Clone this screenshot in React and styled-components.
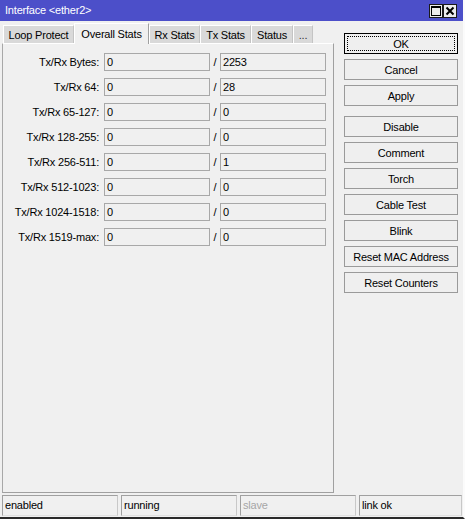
import React from "react";
import styled, { createGlobalStyle } from "styled-components";

const GlobalStyle = createGlobalStyle`
  html, body { margin: 0; padding: 0; background: #f0f0f0; }
  body { font-family: "Liberation Sans", Arial, sans-serif; font-size: 11px; letter-spacing: -0.2px; color: #000; }
  * { box-sizing: border-box; }
`;

const Window = styled.div`
  width: 465px;
  height: 519px;
  background: #f0f0f0;
  display: flex;
  flex-direction: column;
  border-right: 2px solid #fbfbfb;
  border-bottom: 2px solid #2a2a2a;
  overflow: hidden;
`;

const TitleBar = styled.div`
  height: 21px;
  flex: none;
  background: #4c4fc9;
  color: #fff;
  display: flex;
  align-items: center;
  padding: 0 6px 0 5px;
  font-size: 11px;
`;

const TitleText = styled.span`
  flex: 1;
  line-height: 21px;
`;

const TitleButtons = styled.div`
  display: flex;
  margin-top: 1px;
`;

const TitleBtn = styled.div`
  width: 14px;
  height: 14px;
  background: #ececec;
  border: 1px solid #1a1a1a;
  display: flex;
  align-items: center;
  justify-content: center;
`;

const Body = styled.div`
  flex: 1;
  display: flex;
  min-height: 0;
`;

const LeftCol = styled.div`
  width: 334px;
  padding-left: 2px;
  display: flex;
  flex-direction: column;
`;

const TabRow = styled.div`
  height: 21px;
  margin-top: 1px;
  display: flex;
  align-items: flex-end;
  padding-left: 1px;
  position: relative;
  z-index: 1;
`;

const Tab = styled.div`
  width: ${(p) => p.$w}px;
  height: ${(p) => (p.$active ? 21 : 18)}px;
  margin-bottom: ${(p) => (p.$active ? -1 : 0)}px;
  background: ${(p) => (p.$active ? "#f0f0f0" : "#d9d9d9")};
  border-top: 1px solid #fff;
  border-left: 1px solid #fff;
  border-right: 1px solid ${(p) => (p.$active ? "#a0a0a0" : "#c4c4c4")};
  color: ${(p) => (p.$dots ? "#333" : "#000")};
  display: flex;
  align-items: center;
  justify-content: center;
  padding-top: ${(p) => (p.$active ? 0 : 1)}px;
  white-space: nowrap;
`;

const Panel = styled.div`
  flex: 1;
  border-top: 1px solid #fff;
  border-left: 1px solid #a8a8a8;
  border-right: 1px solid #a0a0a0;
  border-bottom: 1px solid #a0a0a0;
  padding: 9px 0 0 0;
  display: grid;
  grid-template-columns: 101px 106px 10px 106px;
  row-gap: 7px;
  align-content: start;
`;

const Label = styled.div`
  height: 18px;
  line-height: 18px;
  text-align: right;
  margin-right: 5px;
  white-space: nowrap;
`;

const Field = styled.div`
  height: 18px;
  border: 1px solid #a8a8a8;
  background: #f0f0f0;
  line-height: 16px;
  padding-left: 2px;
`;

const Slash = styled.div`
  height: 18px;
  line-height: 18px;
  text-align: center;
`;

const RightCol = styled.div`
  flex: 1;
  padding: 12px 0 0 10px;
  display: flex;
  flex-direction: column;
  gap: 5px;
`;

const Button = styled.div`
  width: 114px;
  height: 21px;
  background: #efefef;
  border: 1px solid ${(p) => (p.$default ? "#000" : "#9a9a9a")};
  display: flex;
  align-items: center;
  justify-content: center;
  margin-top: ${(p) => (p.$sep ? 5 : 0)}px;
  position: relative;
  white-space: nowrap;
`;

const FocusRing = styled.span`
  position: absolute;
  inset: 2px;
  border: 1px dotted #000;
`;

const StatusBar = styled.div`
  height: 24px;
  flex: none;
  display: flex;
  padding: 2px 1px 1px 2px;
  gap: 3px;
`;

const StatusField = styled.div`
  width: ${(p) => p.$w}px;
  height: 21px;
  border-top: 1px solid #a0a0a0;
  border-left: 1px solid #a0a0a0;
  border-right: 1px solid #c8c8c8;
  border-bottom: 1px solid #e0e0e0;
  color: ${(p) => (p.$dim ? "#a6a6a6" : "#000")};
  line-height: 19px;
  padding-left: 2px;
`;

const rows = [
  ["Tx/Rx Bytes:", "0", "2253"],
  ["Tx/Rx 64:", "0", "28"],
  ["Tx/Rx 65-127:", "0", "0"],
  ["Tx/Rx 128-255:", "0", "0"],
  ["Tx/Rx 256-511:", "0", "1"],
  ["Tx/Rx 512-1023:", "0", "0"],
  ["Tx/Rx 1024-1518:", "0", "0"],
  ["Tx/Rx 1519-max:", "0", "0"],
];

const tabs = [
  { t: "Loop Protect", w: 71 },
  { t: "Overall Stats", w: 75, active: true },
  { t: "Rx Stats", w: 51 },
  { t: "Tx Stats", w: 51 },
  { t: "Status", w: 42 },
  { t: "...", w: 20, dots: true },
];

const buttons = [
  { t: "OK", def: true },
  { t: "Cancel" },
  { t: "Apply" },
  { t: "Disable", sep: true },
  { t: "Comment" },
  { t: "Torch" },
  { t: "Cable Test" },
  { t: "Blink" },
  { t: "Reset MAC Address" },
  { t: "Reset Counters" },
];

export default function App() {
  return (
    <>
      <GlobalStyle />
      <Window>
        <TitleBar>
          <TitleText>Interface &lt;ether2&gt;</TitleText>
          <TitleButtons>
            <TitleBtn>
              <svg width="10" height="10" viewBox="0 0 10 10">
                <rect x="0.5" y="0.5" width="9" height="9" fill="none" stroke="#000" strokeWidth="1" />
                <line x1="0" y1="1.5" x2="10" y2="1.5" stroke="#000" strokeWidth="1" />
              </svg>
            </TitleBtn>
            <TitleBtn>
              <svg width="10" height="10" viewBox="0 0 10 10">
                <path d="M1.5 1.5 L8.5 8.5 M8.5 1.5 L1.5 8.5" stroke="#000" strokeWidth="2" />
              </svg>
            </TitleBtn>
          </TitleButtons>
        </TitleBar>
        <Body>
          <LeftCol>
            <TabRow>
              {tabs.map((t) => (
                <Tab key={t.t} $w={t.w} $active={t.active} $dots={t.dots}>
                  {t.t}
                </Tab>
              ))}
            </TabRow>
            <Panel>
              {rows.map(([l, a, b]) => (
                <React.Fragment key={l}>
                  <Label>{l}</Label>
                  <Field>{a}</Field>
                  <Slash>/</Slash>
                  <Field>{b}</Field>
                </React.Fragment>
              ))}
            </Panel>
          </LeftCol>
          <RightCol>
            {buttons.map((b) => (
              <Button key={b.t} $default={b.def} $sep={b.sep}>
                {b.def && <FocusRing />}
                {b.t}
              </Button>
            ))}
          </RightCol>
        </Body>
        <StatusBar>
          <StatusField $w={116}>enabled</StatusField>
          <StatusField $w={116}>running</StatusField>
          <StatusField $w={116} $dim>slave</StatusField>
          <StatusField $w={103}>link ok</StatusField>
        </StatusBar>
      </Window>
    </>
  );
}
